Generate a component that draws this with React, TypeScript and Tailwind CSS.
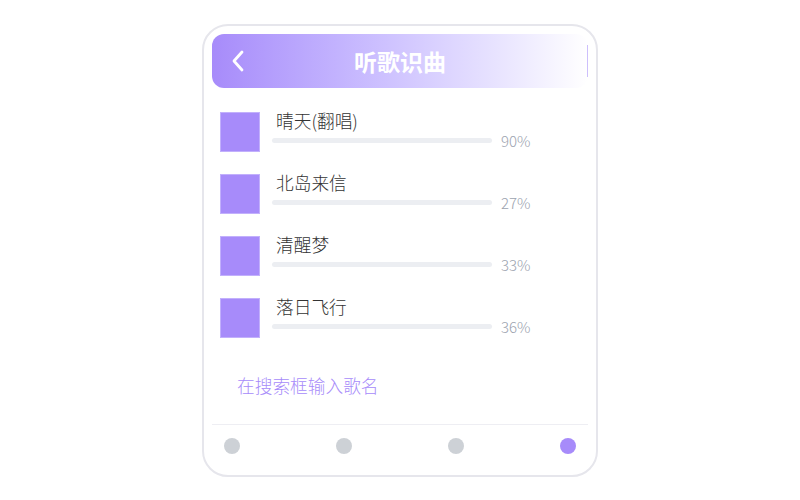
import React from "react";

const songs = [
  { name: "晴天(翻唱)", pct: "90%" },
  { name: "北岛来信", pct: "27%" },
  { name: "清醒梦", pct: "33%" },
  { name: "落日飞行", pct: "36%" },
];

export default function App() {
  return (
    <div
      className="w-full h-[500px] flex items-center justify-center bg-white"
      style={{ fontFamily: '"Noto Sans CJK SC", "Noto Sans", sans-serif' }}
    >
      <div className="w-[396px] h-[453px] border-2 border-[#e6e6ec] rounded-[26px] p-2 flex flex-col">
        <div className="h-[54px] rounded-xl bg-gradient-to-r from-[#a78bfa] to-white flex items-center">
          <div className="w-12 flex items-center pl-[19px]">
            <svg width="13" height="22" viewBox="0 0 13 22" fill="none">
              <polyline
                points="11,2 3,11 11,20"
                stroke="white"
                strokeWidth="2.8"
                strokeLinecap="round"
                strokeLinejoin="round"
              />
            </svg>
          </div>
          <div className="flex-1 text-center text-white font-bold text-[23px] leading-7">
            听歌识曲
          </div>
          <div className="w-12 h-full flex items-center justify-end">
            <div className="w-px h-8 bg-[#cdbffc]" />
          </div>
        </div>

        <div className="mt-6 pl-2 flex flex-col gap-[22px]">
          {songs.map((s) => (
            <div key={s.name} className="flex items-start">
              <div className="w-10 h-10 bg-[#a78bfa] border border-[#c2b0fc] shrink-0" />
              <div className="ml-3 -mt-1 flex flex-col">
                <div className="pl-1 text-[17.7px] font-light leading-6 text-[#333]">{s.name}</div>
                <div className="flex items-center h-5 -mt-px">
                  <div className="w-[220px] h-[5px] rounded-full bg-[#eceef2]" />
                  <div className="ml-[9px] text-[15px] font-light leading-5 text-[#9ca3af]">{s.pct}</div>
                </div>
              </div>
            </div>
          ))}
        </div>

        <div className="mt-[35px] pl-[25px] text-[17.7px] font-light leading-6 text-[#a78bfa]">
          在搜索框输入歌名
        </div>

        <div className="flex-1" />

        <div className="border-t border-[#eeeef3] h-[43px] px-3 flex items-center justify-between">
          <div className="w-4 h-4 rounded-full bg-[#cdd1d6]" />
          <div className="w-4 h-4 rounded-full bg-[#cdd1d6]" />
          <div className="w-4 h-4 rounded-full bg-[#cdd1d6]" />
          <div className="w-4 h-4 rounded-full bg-[#a78bfa]" />
        </div>
      </div>
    </div>
  );
}
